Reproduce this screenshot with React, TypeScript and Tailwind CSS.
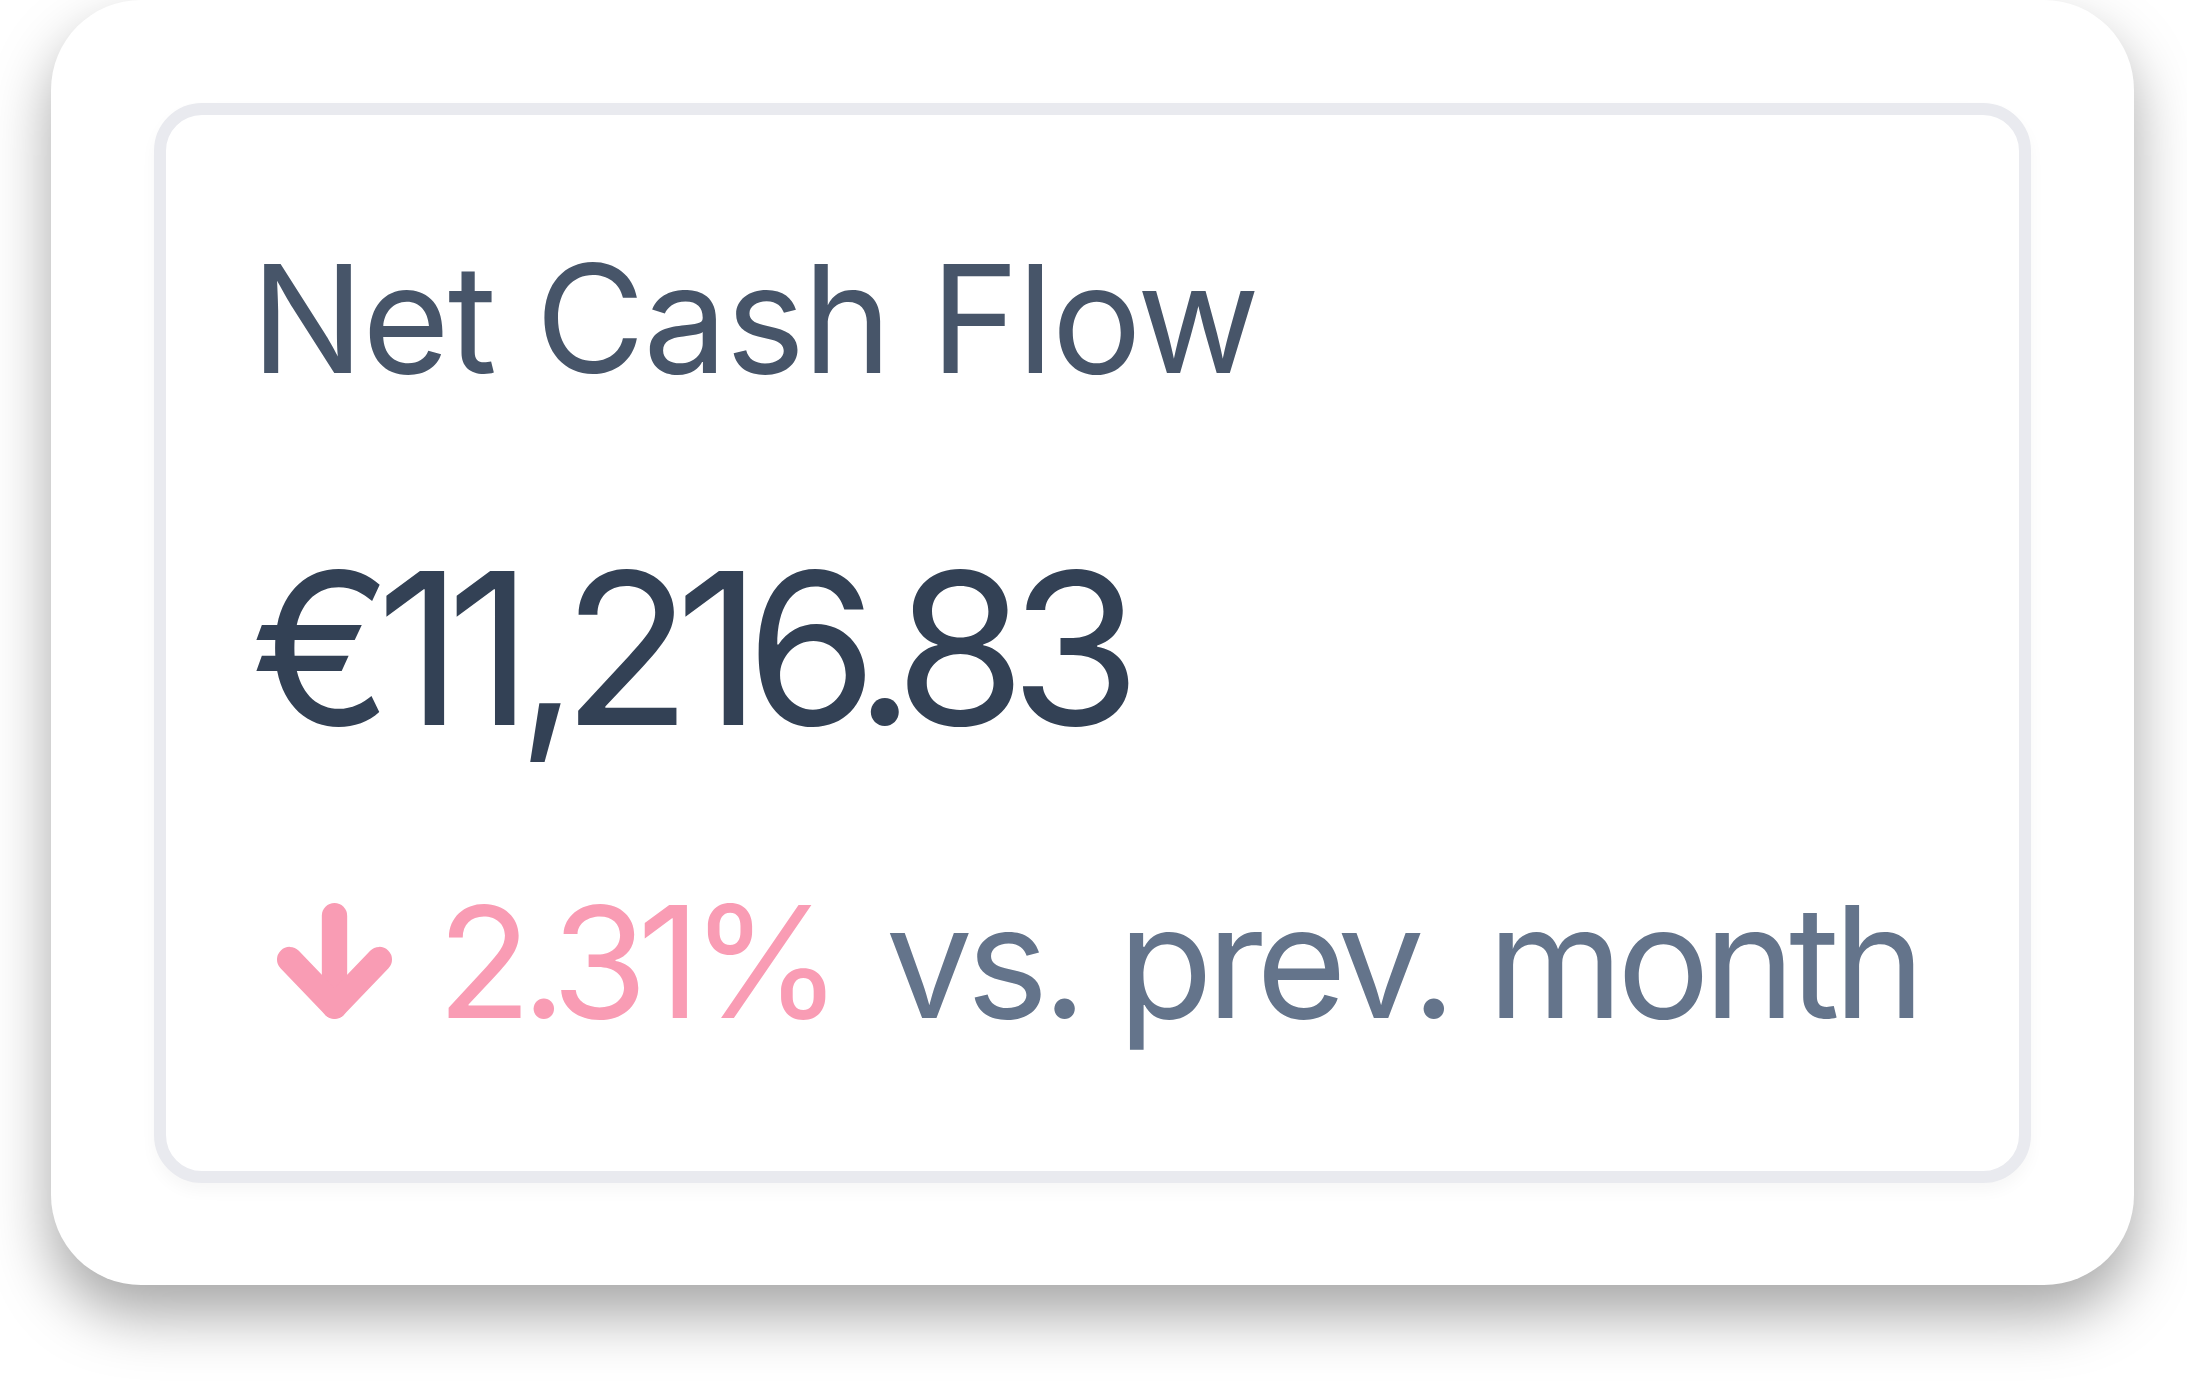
import React from "react";

function ArrowDownIcon() {
  return (
    <svg
      viewBox="0 0 24 24"
      className="w-[117px] h-[117px] shrink-0 ml-[25px]"
      fill="none"
      stroke="#f99cb4"
      strokeWidth={5.2}
      strokeLinecap="round"
      strokeLinejoin="round"
    >
      <path d="M12 2.6V21.2" />
      <path d="M2.8 11.6L12 21.2L21.2 11.6" />
    </svg>
  );
}

export default function App() {
  return (
    <div
      className="w-[2187px] h-[1389px] bg-white overflow-hidden"
      style={{ fontFamily: 'Inter, "Liberation Sans", Arial, sans-serif' }}
    >
      <div className="ml-[51px] w-[2083px] h-[1285px] rounded-[90px] bg-white shadow-[0_30px_60px_rgba(0,0,0,0.35)] p-[103px] pb-[102px]">
        <div className="w-full h-full rounded-[48px] border-[12px] border-[#e9eaef] bg-white shadow-[0_8px_16px_rgba(0,0,0,0.035)] pl-[85px] pt-[129px] flex flex-col">
          <div className="text-[150px] leading-none text-[#475569] tracking-[-0.012em]">Net Cash Flow</div>
          <div className="mt-[148px] text-[212px] leading-none text-[#334155] tracking-[-0.075em]">
            €11,216.83
          </div>
          <div className="mt-[130px] flex items-center text-[155px] leading-none">
            <ArrowDownIcon />
            <span className="ml-[44px] text-[#f99cb4] tracking-[-0.065em]">2.31%</span>
            <span className="ml-[53px] text-[#64748b] tracking-[-0.04em]">vs. prev. month</span>
          </div>
        </div>
      </div>
    </div>
  );
}
